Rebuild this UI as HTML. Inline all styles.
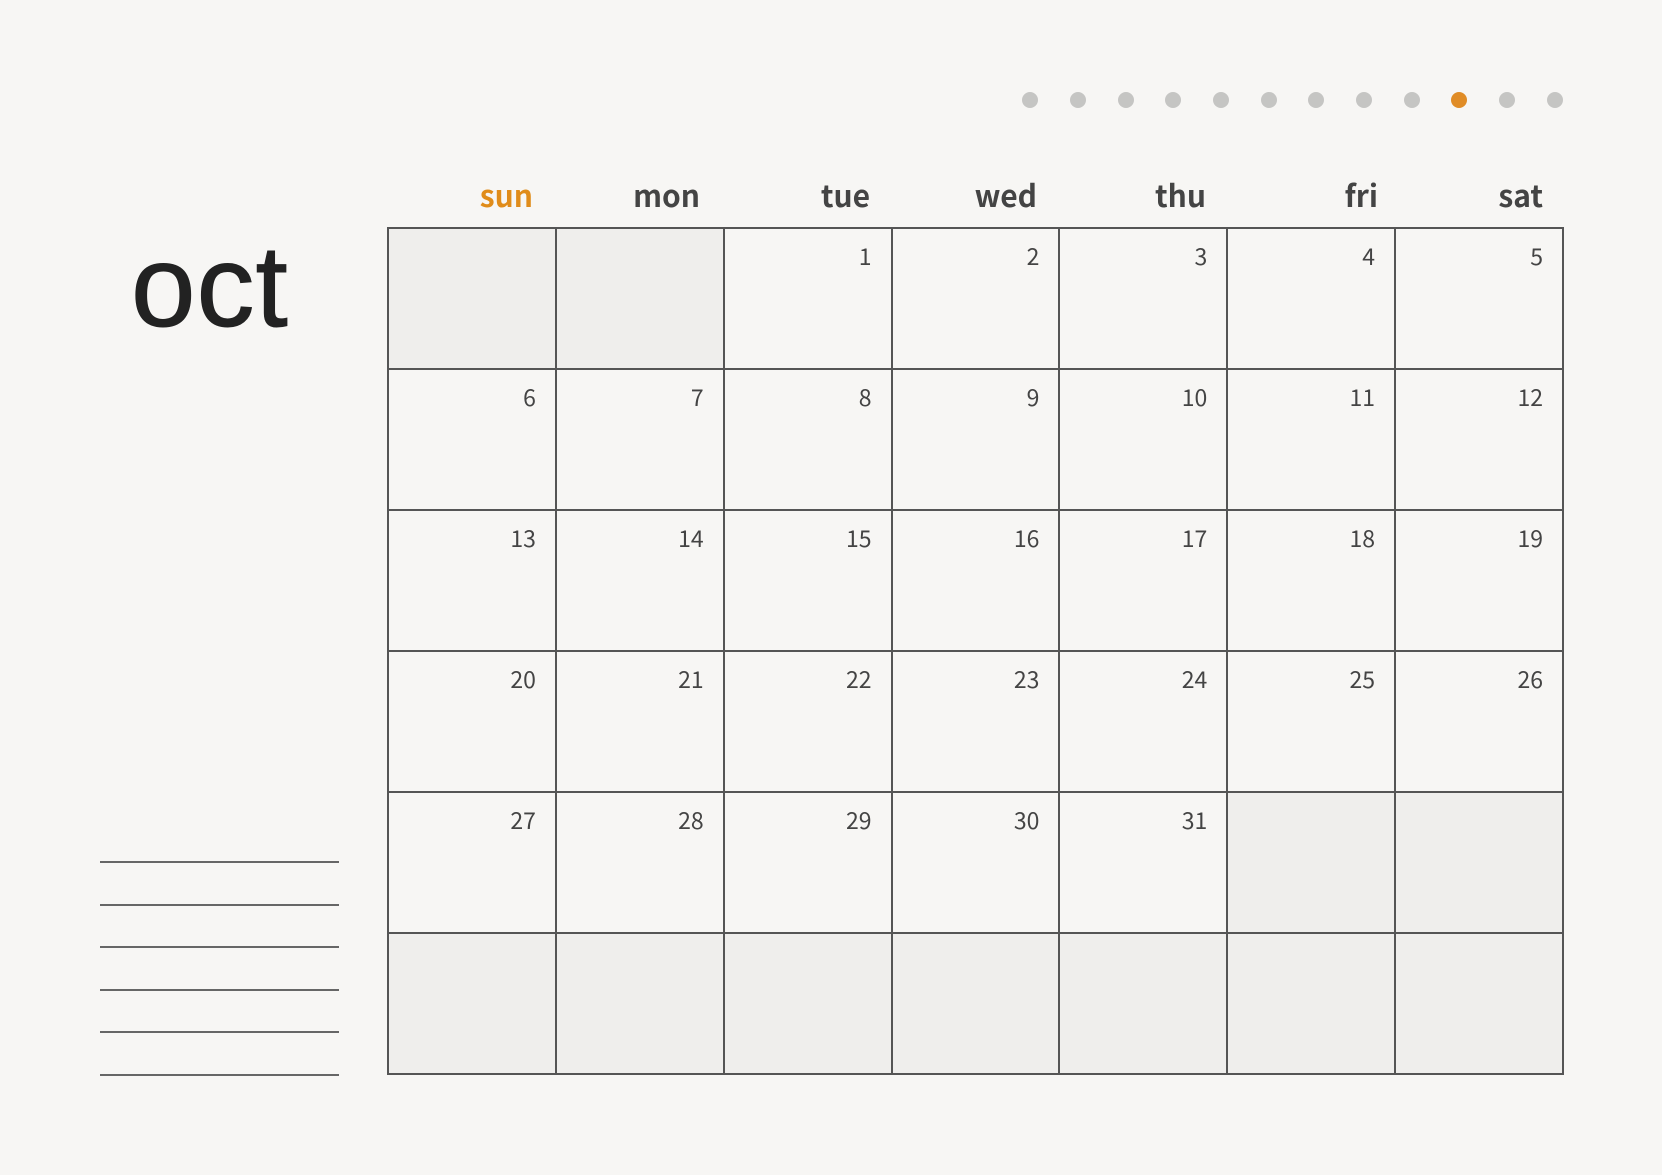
<!DOCTYPE html>
<html><head><meta charset="utf-8">
<style>
html,body{margin:0;padding:0}
body{width:1662px;height:1175px;background:#f7f6f4;position:relative;overflow:hidden;font-family:"Noto Sans CJK JP","Liberation Sans",sans-serif}
.dot{position:absolute;width:16px;height:16px;border-radius:50%;background:#c5c5c3;top:92px}
.hd{position:absolute;top:174px;font-size:30px;font-weight:700;color:#444;text-align:right;width:160px;line-height:40px}
.oct{position:absolute;left:131px;top:228px;font-family:"Liberation Sans",sans-serif;font-size:116px;color:#222;letter-spacing:1px;line-height:1;-webkit-text-stroke:1px #222}
.ln{position:absolute;left:100px;width:239px;height:0;border-top:2px solid #666}
table{position:absolute;left:387px;top:227px;border-collapse:collapse;table-layout:fixed;width:1177px}
td{border:2px solid #555;padding:0;height:139px;box-sizing:border-box;vertical-align:top;text-align:right;font-size:23px;color:#444}
tr{height:141px}
td span{display:block;padding:11px 19px 0 0;line-height:30px}
td.g{background:#efeeec}
</style></head><body>
<div class="dot" style="left:1022px"></div>
<div class="dot" style="left:1070px"></div>
<div class="dot" style="left:1118px"></div>
<div class="dot" style="left:1165px"></div>
<div class="dot" style="left:1213px"></div>
<div class="dot" style="left:1261px"></div>
<div class="dot" style="left:1308px"></div>
<div class="dot" style="left:1356px"></div>
<div class="dot" style="left:1404px"></div>
<div class="dot" style="left:1451px;background:#e08c26"></div>
<div class="dot" style="left:1499px"></div>
<div class="dot" style="left:1547px"></div>

<div class="hd" style="left:373px;color:#e08c1a">sun</div>
<div class="hd" style="left:540px">mon</div>
<div class="hd" style="left:710px">tue</div>
<div class="hd" style="left:877px">wed</div>
<div class="hd" style="left:1046px">thu</div>
<div class="hd" style="left:1218px">fri</div>
<div class="hd" style="left:1383px">sat</div>

<div class="oct">oct</div>

<div class="ln" style="top:861px"></div>
<div class="ln" style="top:904px"></div>
<div class="ln" style="top:946px"></div>
<div class="ln" style="top:989px"></div>
<div class="ln" style="top:1031px"></div>
<div class="ln" style="top:1074px"></div>

<table>
<tr><td class="g"></td><td class="g"></td><td><span>1</span></td><td><span>2</span></td><td><span>3</span></td><td><span>4</span></td><td><span>5</span></td></tr>
<tr><td><span>6</span></td><td><span>7</span></td><td><span>8</span></td><td><span>9</span></td><td><span>10</span></td><td><span>11</span></td><td><span>12</span></td></tr>
<tr><td><span>13</span></td><td><span>14</span></td><td><span>15</span></td><td><span>16</span></td><td><span>17</span></td><td><span>18</span></td><td><span>19</span></td></tr>
<tr><td><span>20</span></td><td><span>21</span></td><td><span>22</span></td><td><span>23</span></td><td><span>24</span></td><td><span>25</span></td><td><span>26</span></td></tr>
<tr><td><span>27</span></td><td><span>28</span></td><td><span>29</span></td><td><span>30</span></td><td><span>31</span></td><td class="g"></td><td class="g"></td></tr>
<tr><td class="g"></td><td class="g"></td><td class="g"></td><td class="g"></td><td class="g"></td><td class="g"></td><td class="g"></td></tr>
</table>
</body></html>
